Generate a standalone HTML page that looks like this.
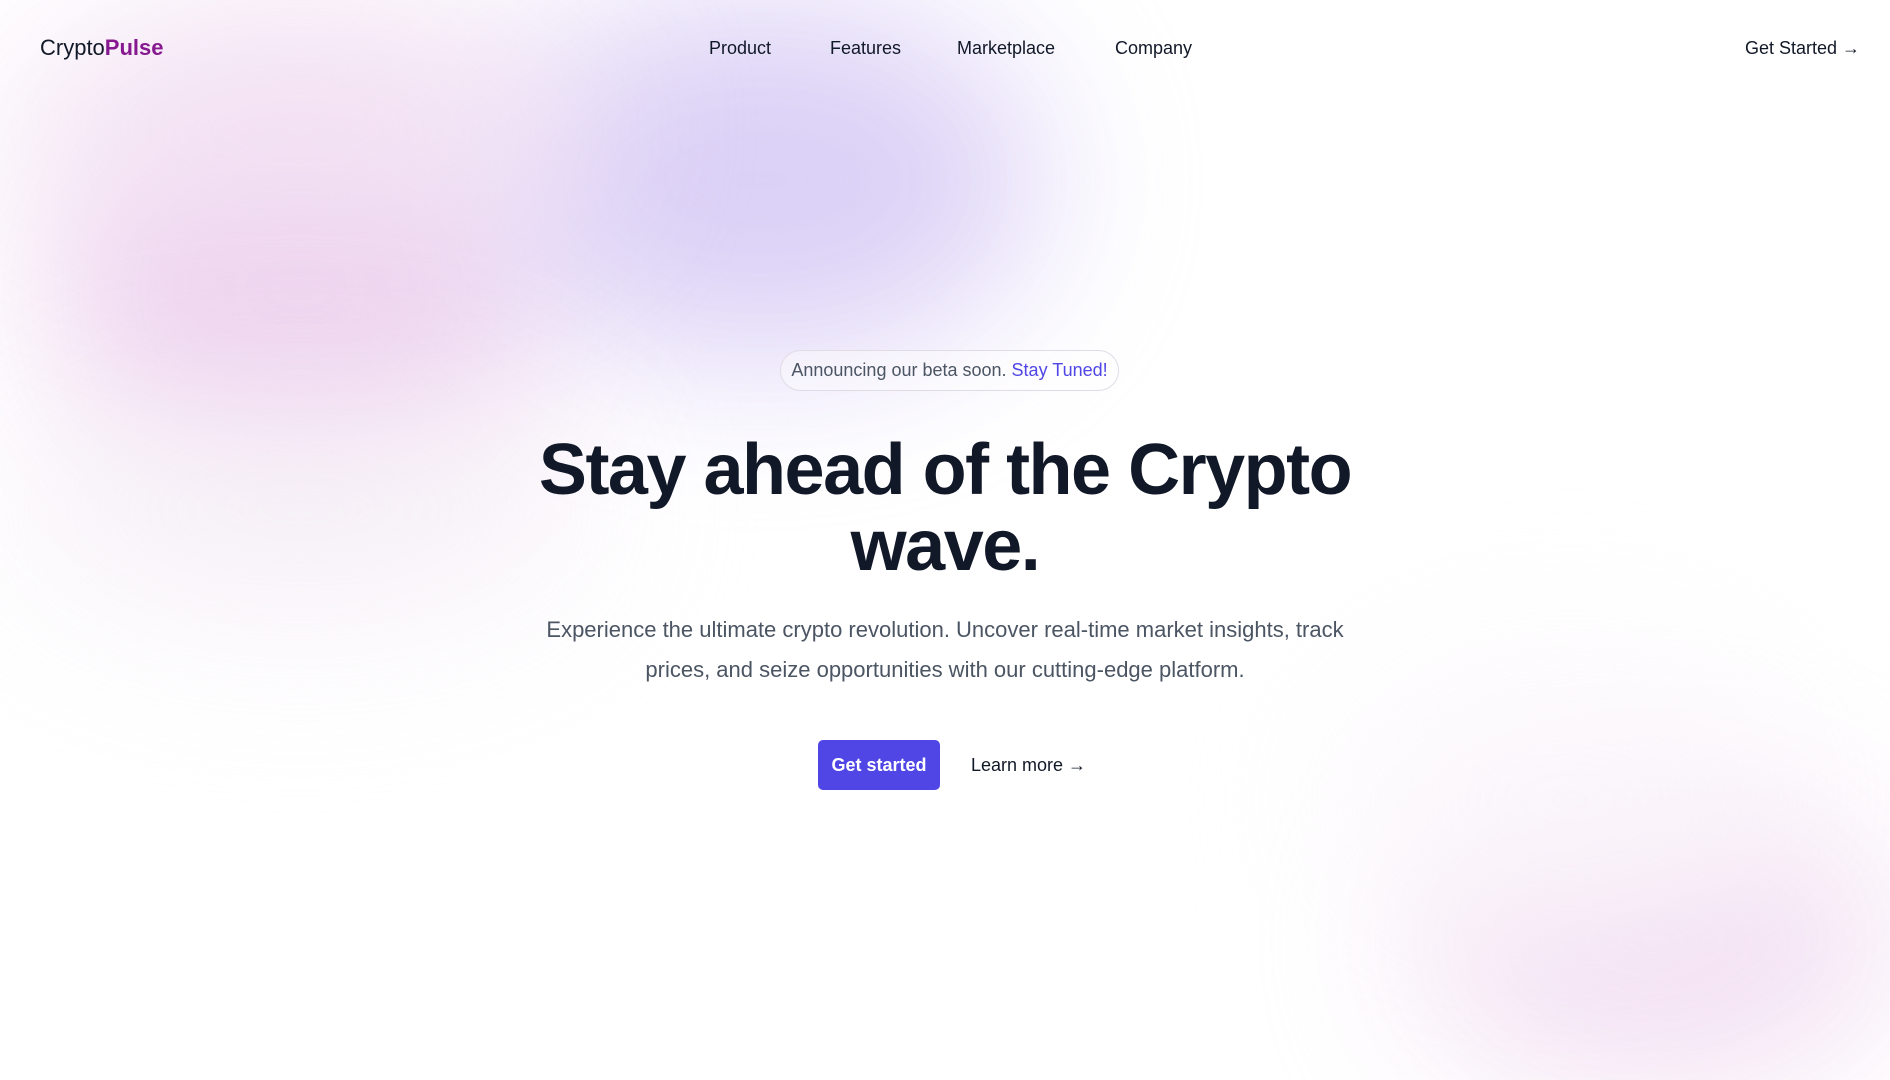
<!DOCTYPE html>
<html style="overflow:hidden;height:1080px"><head><meta charset="utf-8"><style>
*{margin:0;padding:0;box-sizing:border-box}
body{width:1890px;height:1080px;overflow:hidden;background:#fff;font-family:"Liberation Sans",sans-serif;position:relative;color:#111827}
#wrap{position:absolute;left:0;top:0;width:1890px;height:1080px;overflow:hidden}
.blob{position:absolute;border-radius:50%;filter:blur(80px)}
nav a{position:absolute;top:37px;font-size:18px;color:#111827;text-decoration:none;line-height:22px}
</style></head><body><div id="wrap">
<div class="blob" style="left:60px;top:80px;width:480px;height:420px;background:#e9c6ea;opacity:.85"></div>
<div class="blob" style="left:480px;top:0px;width:560px;height:360px;background:#d7cbf5;opacity:.9"></div>
<div class="blob" style="left:0px;top:0px;width:600px;height:260px;background:#f3e3f4;opacity:.8"></div>
<div class="blob" style="left:0px;top:380px;width:600px;height:260px;background:#f7f2f8;opacity:.8"></div>
<div class="blob" style="left:1420px;top:800px;width:470px;height:280px;background:#f0d9f0;opacity:.9"></div>
<div class="blob" style="left:1340px;top:660px;width:460px;height:280px;background:#fbf7fb;opacity:.8"></div>

<div style="position:absolute;left:40px;top:35px;font-size:22px;color:#111827">Crypto<b style="color:#86198f">Pulse</b></div>
<nav>
<a style="left:709px">Product</a>
<a style="left:830px">Features</a>
<a style="left:957px">Marketplace</a>
<a style="left:1115px">Company</a>
<a style="right:30px">Get Started →</a>
</nav>

<div style="position:absolute;left:780px;top:350px;width:339px;height:41px;border:1px solid #e0dce6;border-radius:21px;font-size:18px;line-height:39px;text-align:center;color:#4b5563;background:rgba(255,255,255,.4)">Announcing our beta soon. <span style="color:#4f46e5">Stay Tuned!</span></div>

<h1 style="position:absolute;left:0;width:1890px;top:432px;text-align:center;font-size:72px;line-height:76px;font-weight:700;letter-spacing:-1.5px;color:#111827">Stay ahead of the Crypto<br>wave.</h1>

<p style="position:absolute;left:445px;width:1000px;top:610px;text-align:center;font-size:22px;line-height:40px;color:#4b5563">Experience the ultimate crypto revolution. Uncover real-time market insights, track<br>prices, and seize opportunities with our cutting-edge platform.</p>

<div style="position:absolute;left:818px;top:740px;width:122px;height:50px;background:#4f46e5;border-radius:5px;color:#fff;font-weight:700;font-size:18px;line-height:50px;text-align:center">Get started</div>
<div style="position:absolute;left:971px;top:754px;font-size:18px;line-height:22px;color:#111827">Learn more →</div>
</div></body></html>
